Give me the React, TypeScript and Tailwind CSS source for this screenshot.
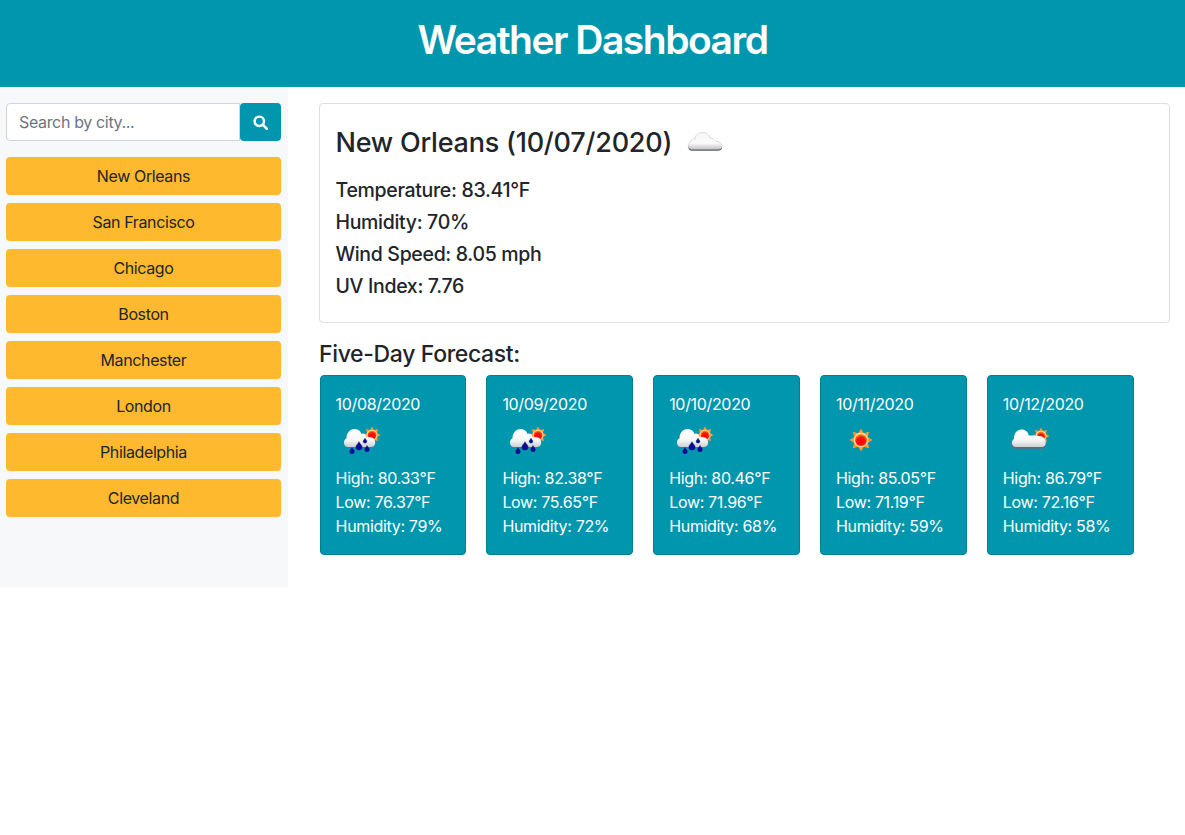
import React from "react";

const cities = ["New Orleans", "San Francisco", "Chicago", "Boston", "Manchester", "London", "Philadelphia", "Cleveland"];

type Kind = "rain" | "sun" | "partly";
const days: { date: string; kind: Kind; high: string; low: string; hum: string }[] = [
  { date: "10/08/2020", kind: "rain", high: "80.33", low: "76.37", hum: "79" },
  { date: "10/09/2020", kind: "rain", high: "82.38", low: "75.65", hum: "72" },
  { date: "10/10/2020", kind: "rain", high: "80.46", low: "71.96", hum: "68" },
  { date: "10/11/2020", kind: "sun", high: "85.05", low: "71.19", hum: "59" },
  { date: "10/12/2020", kind: "partly", high: "86.79", low: "72.16", hum: "58" },
];

function Defs() {
  return (
    <svg width="0" height="0" className="absolute">
      <defs>
        <linearGradient id="cloudG" x1="0" y1="0" x2="0" y2="1">
          <stop offset="0" stopColor="#ffffff" />
          <stop offset="0.6" stopColor="#f8f8f8" />
          <stop offset="1" stopColor="#cfcfcf" />
        </linearGradient>
        <linearGradient id="bigCloudG" x1="0" y1="0" x2="0" y2="1">
          <stop offset="0" stopColor="#f6f6f6" />
          <stop offset="0.65" stopColor="#fbfbfb" />
          <stop offset="1" stopColor="#c4c4c4" />
        </linearGradient>
        <radialGradient id="sunG" cx="0.5" cy="0.62" r="0.6">
          <stop offset="0" stopColor="#ff0000" />
          <stop offset="0.6" stopColor="#ff1408" />
          <stop offset="1" stopColor="#ffa020" />
        </radialGradient>
      </defs>
    </svg>
  );
}

function Sun({ cx, cy, r }: { cx: number; cy: number; r: number }) {
  const pts: string[] = [];
  for (let i = 0; i < 16; i++) {
    const a = (i * Math.PI) / 8 - Math.PI / 2;
    const R = i % 2 === 0 ? r * 1.75 : r * 1.12;
    pts.push(`${cx + R * Math.cos(a)},${cy + R * Math.sin(a)}`);
  }
  return (
    <g>
      <polygon points={pts.join(" ")} fill="#f99d33" />
      <circle cx={cx} cy={cy} r={r * 1.08} fill="#fde2b0" />
      <circle cx={cx} cy={cy} r={r * 0.92} fill="url(#sunG)" />
    </g>
  );
}

function Drop({ x, y, s }: { x: number; y: number; s: number }) {
  return (
    <path
      d={`M${x} ${y - s * 1.5} C${x + s * 0.5} ${y - s * 0.6} ${x + s} ${y - s * 0.3} ${x + s} ${y + s * 0.15} A${s} ${s} 0 0 1 ${x - s} ${y + s * 0.15} C${x - s} ${y - s * 0.3} ${x - s * 0.5} ${y - s * 0.6} ${x} ${y - s * 1.5} Z`}
      fill="#0d0a95"
      stroke="#2a4a8a"
      strokeWidth="0.3"
    />
  );
}

const RAIN_CLOUD = "M11 34 C6.5 34 5.5 28 9.5 26 C9.5 20.5 13.5 17.5 18 17.5 C21.5 17.5 23.5 19.5 24.5 22 C26.5 20.5 29.5 22.5 29.5 25 C33 24.5 37 25 38 28.5 C38.8 31.5 37 34 34 34 Z";
const PARTLY_CLOUD = "M13 32 C8.5 32 7.5 26 11 24 C10.5 18.5 14 14.5 18.5 14.5 C22.5 14.5 25 17 25.8 20.5 C30 20.5 36 20.5 39 21.5 C43.5 23 44.5 32 39 32 Z";
const BIG_CLOUD = "M12 32 C8 32 7 27 10 25.5 C11 22.5 13 21.5 15 22 C15 17.5 19 15.5 23 15.5 C27 15.5 29.5 18 30 21 C33 21 35 23 35.5 24.5 C39 24 42 26.5 42 29 C42 31 40 32 38 32 Z";

function WeatherIcon({ kind }: { kind: Kind }) {
  if (kind === "sun") {
    return (
      <svg viewBox="0 0 50 50" className="w-[50px] h-[50px] block">
        <Sun cx={25} cy={25} r={6.6} />
      </svg>
    );
  }
  if (kind === "partly") {
    return (
      <svg viewBox="0 0 50 50" className="w-[50px] h-[50px] block">
        <Sun cx={38} cy={21} r={4.8} />
        <path d={PARTLY_CLOUD} fill="#5f6b70" transform="translate(0 1.8)" />
        <path d={PARTLY_CLOUD} fill="url(#cloudG)" />
      </svg>
    );
  }
  return (
    <svg viewBox="0 0 50 50" className="w-[50px] h-[50px] block">
      <Sun cx={36} cy={20} r={4.9} />
      <g transform="translate(1 -5) scale(1 1.09)">
        <path d={RAIN_CLOUD} fill="url(#cloudG)" />
      </g>
      <Drop x={16} y={36} s={2.5} />
      <Drop x={23} y={31.5} s={3.3} />
      <Drop x={29} y={26} s={2} />
      <Drop x={31} y={34} s={2.5} />
    </svg>
  );
}

function BigCloud() {
  return (
    <svg viewBox="0 0 50 50" className="w-[50px] h-[50px] block">
      <path d={BIG_CLOUD} fill="#5a6267" transform="translate(0 1.8)" />
      <path d={BIG_CLOUD} fill="url(#bigCloudG)" stroke="#d4d4d4" strokeWidth="0.8" />
    </svg>
  );
}

function SearchGlyph() {
  return (
    <svg viewBox="0 0 16 16" className="w-[15px] h-[15px] block" fill="none" stroke="currentColor">
      <circle cx="6.7" cy="6.7" r="5" strokeWidth="2.6" />
      <path d="M10.6 10.6 L14.6 14.6" strokeWidth="2.8" strokeLinecap="round" />
    </svg>
  );
}

export default function App() {
  return (
    <div className="min-h-[835px] bg-white text-[#212529] font-['Inter','Liberation_Sans',sans-serif]">
      <Defs />
      <header className="h-[87px] bg-[#0097ae] flex items-center justify-center">
        <h1 className="text-[39px] leading-[48px] font-semibold tracking-[-1.5px] text-white mt-[-7px]">Weather Dashboard</h1>
      </header>
      <div className="flex">
        <aside className="w-[288px] h-[500px] shrink-0 bg-[#f7f8fa] pl-[6px] pr-[7px] pt-4">
          <div className="flex h-[38px]">
            <input
              placeholder="Search by city..."
              className="flex-1 min-w-0 h-[38px] pl-3 pr-2 text-base tracking-[-0.35px] bg-white border border-[#ced4da] rounded-l-[4px] placeholder:text-[#6c757d] outline-none"
            />
            <button className="w-[41px] h-[38px] bg-[#0097ae] rounded-[4px] flex items-center justify-center text-white">
              <SearchGlyph />
            </button>
          </div>
          <div className="mt-4 flex flex-col gap-2">
            {cities.map((c) => (
              <button key={c} className="h-[38px] bg-[#ffb92e] rounded-[4px] text-base text-[#212529] text-center tracking-[-0.38px]">
                {c}
              </button>
            ))}
          </div>
        </aside>
        <main className="pl-[31px] pt-4 w-[882px]">
          <section className="h-[220px] border border-[#dfdfdf] rounded-[4px] pl-[15.5px] pr-4 pt-4">
            <div className="flex items-center h-[46px]">
              <h2 className="text-[27px] leading-[32px] font-medium tracking-[-0.23px]">New Orleans (10/07/2020)</h2>
              <div className="ml-[8px] mt-[-2px]"><BigCloud /></div>
            </div>
            <div className="mt-[8px] text-[19.5px] leading-[32px] font-medium tracking-[-0.32px]">
              <p>Temperature: 83.41°F</p>
              <p>Humidity: 70%</p>
              <p>Wind Speed: 8.05 mph</p>
              <p>UV Index: 7.76</p>
            </div>
          </section>
          <h3 className="mt-[17px] text-[23px] leading-[28px] font-medium tracking-[-0.35px]">Five-Day Forecast:</h3>
          <div className="mt-[7px] ml-[0.6px] flex gap-5">
            {days.map((d) => (
              <div key={d.date} className="w-[146.8px] h-[180px] bg-[#0097ae] border border-[#00808f] rounded-[4px] text-white pl-[15px] pt-[16px] text-base tracking-[-0.33px]">
                <div className="leading-6">{d.date}</div>
                <div className="mt-[-1px] h-[50px]"><WeatherIcon kind={d.kind} /></div>
                <div className="mt-[1px] leading-6">High: {d.high}°F</div>
                <div className="leading-6">Low: {d.low}°F</div>
                <div className="leading-6">Humidity: {d.hum}%</div>
              </div>
            ))}
          </div>
        </main>
      </div>
    </div>
  );
}
